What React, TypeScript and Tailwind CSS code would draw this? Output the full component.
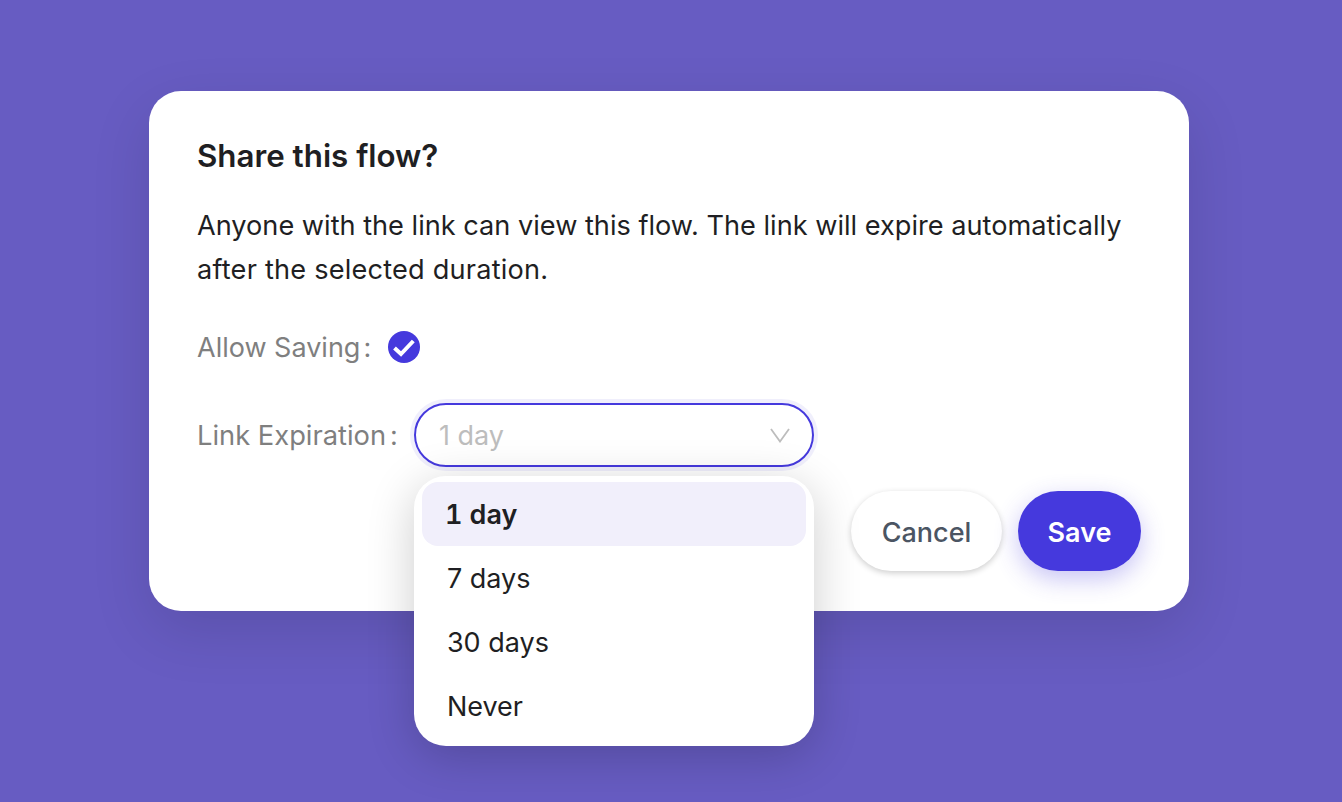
export default function App() {
  return (
    <div className="w-full min-h-[802px] bg-[#675cc2] flex justify-start pl-[149px] pt-[91px] font-['Inter',sans-serif]">
      <div className="w-[1040px] h-[520px] bg-white rounded-[32px] px-[48px] pt-[47px] shadow-[0_20px_60px_rgba(0,0,0,0.12)]">
        <h2 className="text-[31.3px] leading-[36px] font-semibold text-[#1f1f23]">Share this flow?</h2>
        <p className="mt-[30px] text-[27.15px] leading-[44px] text-[#1f1f23]">
          Anyone with the link can view this flow. The link will expire automatically <span className="tracking-[0.21px]">after the selected duration.</span>
        </p>
        <div className="mt-[31px] flex items-center h-[48px]">
          <span className="pt-[2px] text-[27px] text-[#7f7f7f]">Allow Saving</span>
          <span className="pt-[2px] text-[27px] text-[#7f7f7f] ml-[3px]">:</span>
          <span className="ml-[17px] w-[32px] h-[32px] rounded-full bg-[#4539dd] flex items-center justify-center">
            <svg width="32" height="32" viewBox="0 0 32 32" fill="none">
              <path d="M6.5 17 L13 23 L25.3 10" stroke="#fff" strokeWidth="4" />
            </svg>
          </span>
        </div>
        <div className="mt-[32px] flex items-center h-[64px]">
          <span className="pt-[2px] text-[27.3px] text-[#7f7f7f]">Link Expiration</span>
          <span className="pt-[2px] text-[27px] text-[#7f7f7f] ml-[4px]">:</span>
          <div className="relative ml-[16px]">
            <div className="w-[400px] h-[64px] rounded-full border-2 border-[#4539dd] shadow-[0_0_0_4px_rgba(69,57,221,0.08)] flex items-center justify-between pl-[23px] pr-[22px]">
              <span className="pt-[2px] text-[27px] text-[#bdbdbd]">1 day</span>
              <svg width="20" height="15" viewBox="0 0 20 15" fill="none">
                <path d="M1 1 L10 13.5 L19 1" stroke="#bdbdbd" strokeWidth="1.8" />
              </svg>
            </div>
            <div className="absolute left-0 top-[73px] w-[400px] h-[270px] bg-white rounded-[32px] p-[6px_8px] shadow-[0_10px_48px_rgba(0,0,0,0.2)]">
              <div className="h-[64px] pt-[2px] rounded-[16px] bg-[#f1effb] flex items-center px-[23px] text-[27px] font-semibold text-[#1f1f23] tabular-nums">1 day</div>
              <div className="h-[64px] pt-[2px] flex items-center px-[25px] text-[27px] text-[#1f1f23]">7 days</div>
              <div className="h-[64px] pt-[2px] flex items-center px-[25px] text-[27px] text-[#1f1f23]">30 days</div>
              <div className="h-[64px] pt-[2px] flex items-center px-[25px] text-[27px] text-[#1f1f23]">Never</div>
            </div>
          </div>
        </div>
        <div className="mt-[24px] flex justify-end gap-[16px]">
          <button className="w-[151px] h-[80px] pt-[4px] rounded-full bg-white text-[27px] font-medium text-[#4b5563] shadow-[0_2px_6px_rgba(0,0,0,0.2)]">Cancel</button>
          <button className="w-[123px] h-[80px] pt-[4px] rounded-full bg-[#4539dd] text-[27px] font-semibold text-white shadow-[0_8px_24px_rgba(69,57,221,0.3)]">Save</button>
        </div>
      </div>
    </div>
  );
}
